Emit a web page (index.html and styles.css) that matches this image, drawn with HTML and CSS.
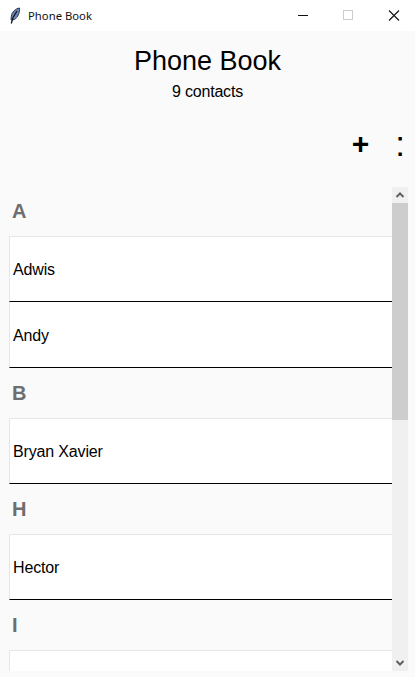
FILE: index.html
```html
<!DOCTYPE html>
<html lang="en">
<head>
    <meta charset="UTF-8">
    <meta name="viewport" content="width=device-width, initial-scale=1.0">
    <title>Phone Book</title>
    <link rel="stylesheet" href="styles.css">
</head>
<body>
    <div class="titlebar">
        <svg class="app-icon" width="16" height="18" viewBox="0 0 16 18">
            <path d="M12.5 1 C8.5 1.5 4.8 5 4.3 9.5 L4 13 L7.5 12.5 C10.5 10.5 13 6 12.5 1 Z" fill="#6d86ad" stroke="#2c3a55" stroke-width="1"/>
            <path d="M10 4 L6 10.5 L4.3 16.5" fill="none" stroke="#10151f" stroke-width="1.3"/>
        </svg>
        <span class="window-title">Phone Book</span>
        <div class="window-controls">
            <svg width="45" height="31" viewBox="0 0 45 31"><path d="M17 15.5 H27" stroke="#111" stroke-width="1"/></svg>
            <svg width="45" height="31" viewBox="0 0 45 31"><rect x="17.5" y="10.5" width="9" height="9" fill="none" stroke="#ccc" stroke-width="1"/></svg>
            <svg width="45" height="31" viewBox="0 0 45 31"><path d="M18 10.5 L28 20.5 M28 10.5 L18 20.5" stroke="#111" stroke-width="1.1"/></svg>
        </div>
    </div>

    <header class="page-head">
        <h1>Phone Book</h1>
        <p>9 contacts</p>
    </header>

    <div class="toolbar">
        <span class="tool plus">+</span>
        <span class="tool more">:</span>
    </div>

    <div class="contacts">
        <div class="list">
            <h2>A</h2>
            <ul>
                <li>Adwis</li>
                <li>Andy</li>
            </ul>
            <h2>B</h2>
            <ul>
                <li>Bryan Xavier</li>
            </ul>
            <h2>H</h2>
            <ul>
                <li>Hector</li>
            </ul>
            <h2>I</h2>
            <ul>
                <li></li>
            </ul>
        </div>
        <div class="scrollbar">
            <div class="arrow">
                <svg width="16" height="16" viewBox="0 0 16 16"><path d="M4.5 10 L8 6.5 L11.5 10" fill="none" stroke="#606060" stroke-width="2"/></svg>
            </div>
            <div class="track"><div class="thumb"></div></div>
            <div class="arrow">
                <svg width="16" height="16" viewBox="0 0 16 16"><path d="M4.5 6 L8 9.5 L11.5 6" fill="none" stroke="#606060" stroke-width="2"/></svg>
            </div>
        </div>
    </div>
</body>
</html>
```

FILE: styles.css
```css
* {
    margin: 0;
    padding: 0;
    box-sizing: border-box;
}
ul {
    list-style: none;
}
body {
    height: 677px;
    overflow: hidden;
    background-color: #fafafa;
    color: #000;
    font-family: "Liberation Sans", Arial, sans-serif;
}
.titlebar {
    display: flex;
    align-items: center;
    height: 31px;
    padding-left: 7px;
    background-color: #fff;
}
.app-icon {
    margin-right: 5px;
}
.window-title {
    font-family: "Noto Sans", sans-serif;
    font-size: 11.3px;
    color: #111;
}
.window-controls {
    display: flex;
    margin-left: auto;
    margin-right: -1px;
}
.page-head {
    height: 81px;
    padding-top: 14px;
    text-align: center;
}
.page-head h1 {
    font-size: 27px;
    font-weight: normal;
    line-height: 32px;
}
.page-head p {
    font-size: 16px;
    letter-spacing: -0.2px;
    line-height: 20px;
    margin-top: 5px;
}
.toolbar {
    display: flex;
    justify-content: flex-end;
    height: 75px;
}
.tool {
    line-height: 40px;
}
.plus {
    font-size: 30px;
    font-weight: bold;
    margin-top: 12px;
    margin-right: 26px;
}
.more {
    font-size: 35px;
    margin-top: 12px;
    margin-right: 10px;
}
.contacts {
    display: flex;
    height: 484px;
    padding-left: 9px;
}
.list {
    width: 383px;
    overflow: hidden;
}
.list h2 {
    height: 50px;
    margin-top: -1px;
    padding-left: 3px;
    font-size: 20px;
    line-height: 50px;
    color: #6e6e6e;
}
.list ul + h2 {
    margin-top: 0;
}
.list li {
    height: 66px;
    padding-left: 3px;
    background-color: #fff;
    border-left: 1px solid #e6e6e6;
    border-bottom: 1px solid #000;
    font-size: 16px;
    letter-spacing: -0.15px;
    line-height: 67px;
}
.list li:first-child {
    border-top: 1px solid #e6e6e6;
    line-height: 65px;
}
.scrollbar {
    display: flex;
    flex-direction: column;
    width: 16px;
    background-color: #f0f0f0;
}
.arrow {
    height: 16px;
}
.track {
    flex: 1;
}
.thumb {
    height: 217px;
    background-color: #cdcdcd;
}
```
